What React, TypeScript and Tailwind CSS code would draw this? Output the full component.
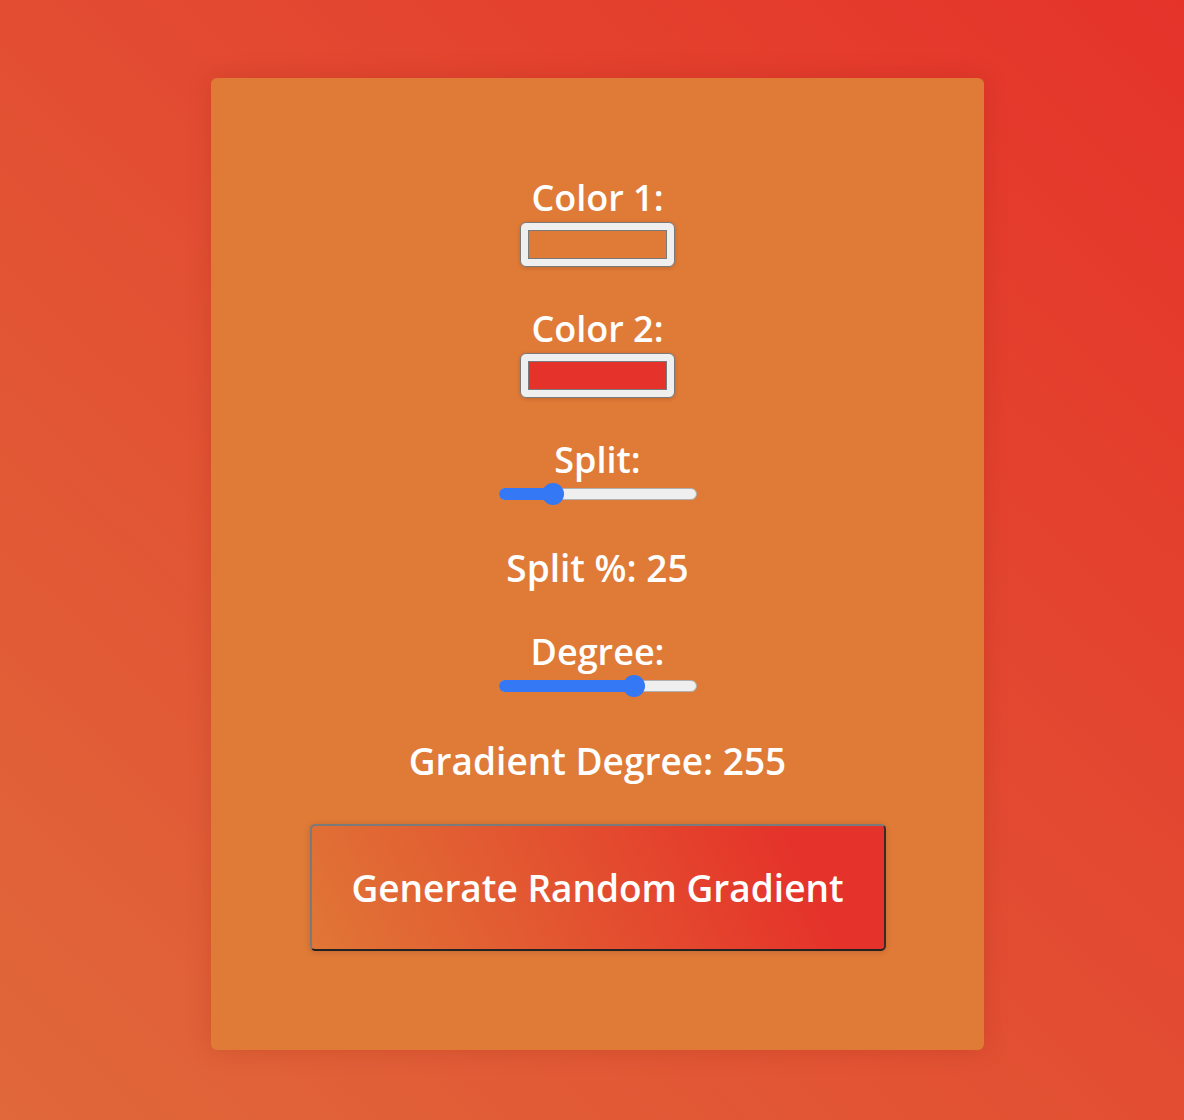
import React from "react";

const font = { fontFamily: '"Open Sans", "Noto Sans", sans-serif' };

function ColorBox({ color }: { color: string }) {
  return (
    <div className="mt-1 flex h-[45px] w-[155px] items-center justify-center rounded-[6px] border border-[#7a7a7a] bg-[#efefef] shadow-[0_1px_4px_rgba(0,0,0,0.15)]">
      <div className="h-[29px] w-[139px] border border-[#7a7a7a]" style={{ background: color }} />
    </div>
  );
}

function Slider({ pct }: { pct: number }) {
  const thumb = 10.5 + pct * 177;
  return (
    <div className="relative mt-[3px] h-[22px] w-[198px]">
      <div className="absolute left-0 right-0 top-[5px] h-[12px] rounded-full border border-[#b0b0b0] bg-[#efefef]" />
      <div
        className="absolute left-0 top-[5px] h-[12px] rounded-full bg-[#3478f6]"
        style={{ width: thumb }}
      />
      <div
        className="absolute top-0 h-[22px] w-[22px] rounded-full bg-[#3478f6]"
        style={{ left: thumb - 11 }}
      />
    </div>
  );
}

export default function App() {
  return (
    <div
      className="flex min-h-[1120px] w-full justify-center pl-[11px] pt-[78px] pb-[70px]"
      style={{ ...font, background: "linear-gradient(to bottom left, #e5332a, #e0683a)" }}
    >
      <div className="flex h-[972px] w-[773px] flex-col items-center rounded-[6px] bg-[#e07a37] pt-[100px] text-white shadow-[0_0_24px_rgba(120,20,0,0.18)]">
        <div className="text-[36px] font-semibold leading-[40px]">Color 1:</div>
        <ColorBox color="#e07a37" />
        <div className="mt-[42px] text-[36px] font-semibold leading-[40px]">Color 2:</div>
        <ColorBox color="#e5322a" />
        <div className="mt-[42px] text-[36px] font-semibold leading-[40px]">Split:</div>
        <Slider pct={0.25} />
        <div className="mt-[43px] text-[37px] font-semibold leading-[40px]">Split %: 25</div>
        <div className="mt-[44px] text-[36px] font-semibold leading-[40px]">Degree:</div>
        <Slider pct={255 / 360} />
        <div className="mt-[44px] text-[37px] font-semibold leading-[40px]">Gradient Degree: 255</div>
        <button
          className="mt-[43px] flex h-[127px] w-[576px] items-center justify-center rounded-[5px] border-2 border-b-[#222] border-l-[#7a7a7a] border-r-[#3a2a2a] border-t-[#7a7a7a] text-[37px] font-semibold text-white shadow-[0_1px_6px_rgba(0,0,0,0.15)]"
          style={{ ...font, background: "linear-gradient(245deg, #e5322a 15%, #e07a37 105%)" }}
        >
          Generate Random Gradient
        </button>
      </div>
    </div>
  );
}
